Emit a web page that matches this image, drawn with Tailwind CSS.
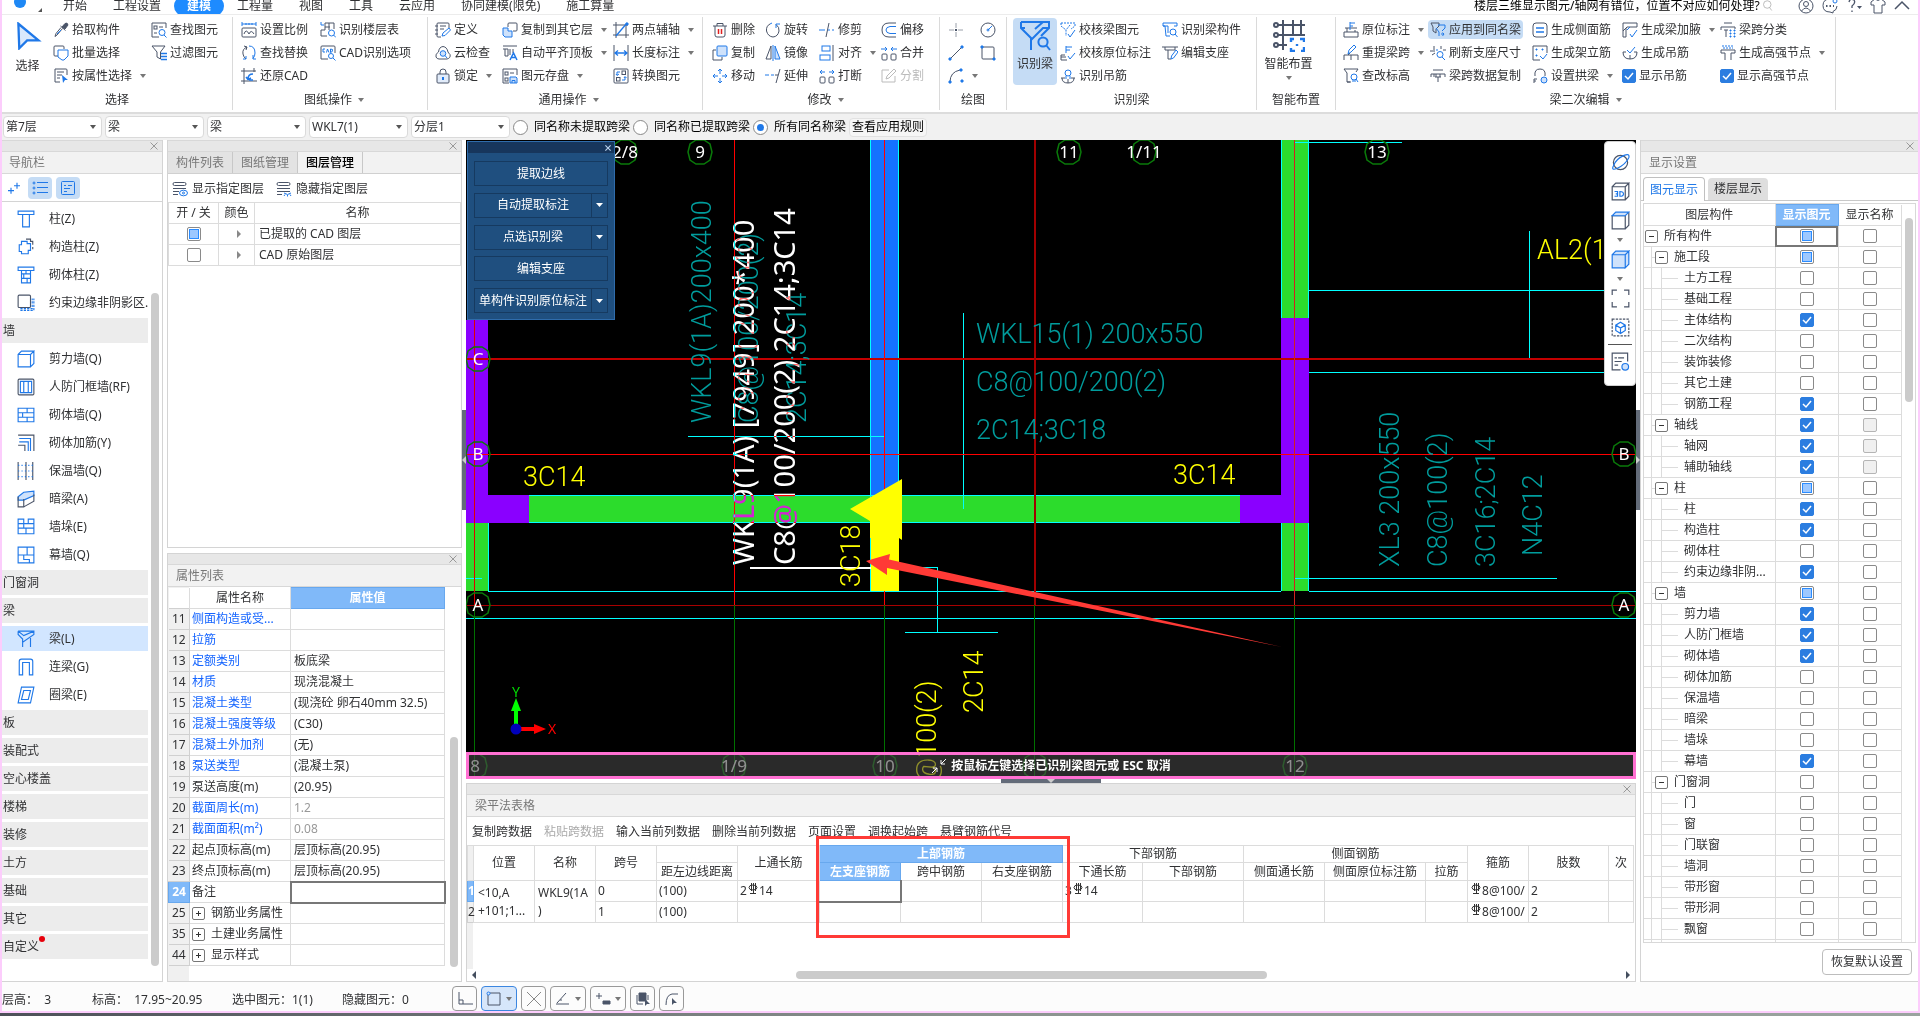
<!DOCTYPE html>
<html lang="zh-CN">
<head>
<meta charset="utf-8">
<meta name="viewport" content="width=device-width, initial-scale=1">
<title>建模</title>
<script src="https://cdn.jsdelivr.net/npm/@tailwindcss/browser@4"></script>
</head>
<body class="h-screen overflow-hidden flex flex-col bg-white text-[#303133] text-xs leading-4 font-['Noto_Sans','Noto_Sans_CJK_SC',sans-serif]">
<div class="flex-1 min-h-0 flex flex-col border-x-2 border-b-2 border-[#fccdfc]">

  <!-- menu -->
  <header class="h-[15px] shrink-0 flex items-center overflow-hidden border-b border-[#ececec] pb-0.5 pr-2">
    <div class="w-12 shrink-0 flex items-center pl-3 gap-3">
      <span class="size-3 -mt-2 rounded-full bg-[#1e88f5]"></span>
      <svg class="size-1 mt-2" viewBox="0 0 4 4" fill="#555"><path d="M4 0V4H0Z"/></svg>
    </div>
    <nav id="menu" class="flex items-center shrink-0"></nav>
    <div class="flex-1"></div>
    <input aria-label="搜索" class="w-72 h-4 outline-none text-black" value="楼层三维显示图元/轴网有错位，位置不对应如何处理?">
    <div id="tools" class="flex items-center gap-2"></div>
  </header>

  <!-- ribbon -->
  <section id="ribbon" class="h-[99px] shrink-0 flex pt-0.5 border-b-2 border-[#dcdcdc]"></section>

  <!-- context bar -->
  <form id="ctx" class="h-[26px] shrink-0 flex items-center gap-[3px] bg-[#f1f1f1] pl-px text-black"></form>

  <main class="flex-1 min-h-0 flex bg-white">
    <!-- navigation -->
    <aside class="w-[161px] shrink-0 flex flex-col border-r border-b border-[#d4d4d4]">
      <div class="h-3 bg-[#e7e7e7] border-y border-[#d8d8d8] flex justify-end items-center pr-1"><button aria-label="关闭" data-i="x" data-c="size-2"></button></div>
      <h2 class="h-[22px] bg-[#f2f2f2] border-b border-[#d8d8d8] flex items-center pl-[7px] text-[#777]">导航栏</h2>
      <div class="h-7 border-b border-[#d4d4d4] flex items-center gap-1 pl-0.5">
        <button aria-label="展开" class="w-5 h-[22px] grid place-items-center" data-i="plus2" data-c="size-3"></button>
        <button aria-label="列表" class="w-6 h-[22px] rounded-sm bg-[#c5dcf5] grid place-items-center" data-i="list" data-c="size-4"></button>
        <button aria-label="面板" class="w-6 h-[22px] rounded-sm bg-[#c5dcf5] grid place-items-center" data-i="panel" data-c="size-4"></button>
      </div>
      <div class="flex-1 min-h-0 flex pt-1 overflow-hidden">
        <ul id="nav" class="w-[146px] flex flex-col gap-[3px]"></ul>
        <div class="w-2 ml-[3px] mt-[87px] mb-[15px] rounded-full bg-[#cbcbcb]"></div>
      </div>
    </aside>

    <!-- layers and properties -->
    <div class="w-[295px] ml-1 shrink-0 flex flex-col gap-[5px]">
      <section class="h-[408px] shrink-0 border border-t-0 border-[#d4d4d4]">
        <div class="h-3 bg-[#e7e7e7] border-y border-[#d8d8d8] flex justify-end items-center pr-1"><button aria-label="关闭" data-i="x" data-c="size-2"></button></div>
        <div class="h-[22px] flex bg-[#f2f2f2] border-b border-[#d0d0d0] text-[#777] text-center">
          <button class="w-[65px] bg-[#e3e3e3] border-r border-[#c8c8c8]">构件列表</button>
          <button class="w-[65px] bg-[#e3e3e3] border-r border-[#c8c8c8]">图纸管理</button>
          <button class="w-[65px] border-r border-[#c8c8c8] text-black font-medium">图层管理</button>
        </div>
        <div class="h-7 flex items-center gap-3 pl-1 pt-0.5">
          <button class="flex items-center gap-1"><span data-i="layShow" data-c="size-4"></span>显示指定图层</button>
          <button class="flex items-center gap-1"><span data-i="layHide" data-c="size-4"></span>隐藏指定图层</button>
        </div>
        <table class="w-full table-fixed border-collapse">
          <colgroup><col class="w-[50px]"><col class="w-9"><col></colgroup>
          <thead><tr class="h-[21px]"><th class="font-normal border border-[#dcdcdc]">开 / 关</th><th class="font-normal border border-[#dcdcdc]">颜色</th><th class="font-normal border border-[#dcdcdc]">名称</th></tr></thead>
          <tbody id="layers"></tbody>
        </table>
      </section>
      <section class="flex-1 min-h-0 border border-[#d4d4d4] flex flex-col">
        <div class="h-[11px] bg-[#e7e7e7] border-b border-[#d8d8d8] flex justify-end items-center pr-1"><button aria-label="关闭" data-i="x" data-c="size-2"></button></div>
        <h2 class="h-[22px] bg-[#f2f2f2] border-b border-[#d8d8d8] flex items-center pl-2 text-[#777]">属性列表</h2>
        <div class="flex-1 min-h-0 flex overflow-hidden">
          <div class="w-[277px] bg-[linear-gradient(to_right,#f0f0f0_21px,#fff_21px)]">
            <table class="w-full table-fixed border-collapse">
              <colgroup><col class="w-[21px]"><col class="w-[101px]"><col></colgroup>
              <thead><tr class="h-[21px]"><th class="bg-white"></th><th class="font-normal border border-t-0 border-[#dcdcdc] bg-white">属性名称</th><th class="bg-[#80b9f9] border border-[#68a8ee] text-white font-bold">属性值</th></tr></thead>
              <tbody id="props"></tbody>
            </table>
          </div>
          <div class="w-2 ml-[5px] mt-[150px] mb-[14px] rounded-full bg-[#cbcbcb]"></div>
        </div>
      </section>
    </div>

    <div class="w-1 shrink-0 flex items-start pt-[270px]"><button aria-label="折叠左侧" class="w-1 h-[100px] bg-[#636b79] grid place-items-center"><svg class="w-1 h-2" viewBox="0 0 4 8" fill="#ccc"><path d="M4 0V8L0 4Z"/></svg></button></div>

    <!-- drawing and table -->
    <div class="flex-1 min-w-0 flex flex-col">
      <section class="flex-1 min-h-0 relative bg-black overflow-hidden">
        <svg id="cad" class="block w-full h-full" viewBox="466 140 1170 639" preserveAspectRatio="xMinYMin slice" fill="none"></svg>

        <!-- command palette -->
        <div class="absolute left-px top-px w-[148px] h-[179px] bg-[#1f4f7f] border border-[#2f6cab] text-white flex flex-col">
          <div class="h-[11px] bg-[#17365c] flex justify-end items-center pr-[3px]"><button aria-label="关闭" data-i="xw" data-c="size-1.5"></button></div>
          <div id="palette" class="flex-1 flex flex-col justify-between px-1.5 pt-2 pb-1.5"></div>
        </div>

        <!-- view tools -->
        <div id="views" class="absolute right-0 top-px w-8 h-[245px] bg-white rounded-sm border border-[#d0d0d0] flex flex-col items-center pt-1.5"></div>

        <!-- prompt bar -->
        <div class="absolute inset-x-0 bottom-0 h-[27px] border-3 border-[#ff70d2] bg-[#464646]/60 flex items-center justify-center text-white font-bold">
          <span class="mr-1" data-i="converge" data-c="size-4"></span><span>按鼠标左键选择已识别梁图元或 ESC 取消</span>
        </div>
      </section>
      <div class="h-1 flex justify-center"><button aria-label="折叠底部" class="w-[100px] h-1 bg-[#636b79] grid place-items-center"><svg class="w-2 h-1" viewBox="0 0 8 4" fill="#ccc"><path d="M0 0H8L4 4Z"/></svg></button></div>
      <section class="h-[199px] shrink-0 border border-[#d4d4d4] flex flex-col relative">
        <div class="h-[11px] shrink-0 bg-[#e7e7e7] border-b border-[#d8d8d8] flex justify-end items-center pr-1"><button aria-label="关闭" data-i="x" data-c="size-2"></button></div>
        <h2 class="h-[22px] shrink-0 bg-[#f2f2f2] border-b border-[#d8d8d8] flex items-center pl-2 text-[#777]">梁平法表格</h2>
        <div class="h-7 shrink-0 flex items-center gap-3 pl-[5px] pt-0.5">
          <button>复制跨数据</button><button class="text-[#aaa]" disabled>粘贴跨数据</button><button>输入当前列数据</button><button>删除当前列数据</button><button>页面设置</button><button>调换起始跨</button><button>悬臂钢筋代号</button>
        </div>
        <div class="flex-1 min-h-0 bg-[linear-gradient(to_right,#f0f0f0_6px,#fff_6px)] overflow-hidden">
          <table class="w-[1166px] table-fixed border-collapse whitespace-nowrap" id="beam"></table>
        </div>
        <div class="h-3 shrink-0 flex items-center justify-between px-1">
          <svg class="w-1.5 h-2" viewBox="0 0 6 8" fill="#444e5e"><path d="M5 0V8L1 4Z"/></svg>
          <div class="w-[471px] h-2 rounded-full bg-[#cbcbcb] -translate-x-5"></div>
          <svg class="w-1.5 h-2" viewBox="0 0 6 8" fill="#444e5e"><path d="M1 0V8L5 4Z"/></svg>
        </div>
        <div class="absolute left-[349px] top-[52px] w-[254px] h-[102px] border-3 border-[#ff3a36] pointer-events-none"></div>
      </section>
    </div>

    <div class="w-1 shrink-0 flex items-start pt-[270px]"><button aria-label="折叠右侧" class="w-1 h-[100px] bg-[#636b79] grid place-items-center"><svg class="w-1 h-2" viewBox="0 0 4 8" fill="#ccc"><path d="M0 0V8L4 4Z"/></svg></button></div>

    <!-- display settings -->
    <aside class="w-[278px] shrink-0 border-l border-b border-[#d4d4d4] flex flex-col">
      <div class="h-3 shrink-0 bg-[#e7e7e7] border-y border-[#d8d8d8] flex justify-end items-center pr-1"><button aria-label="关闭" data-i="x" data-c="size-2"></button></div>
      <h2 class="h-[22px] shrink-0 bg-[#f2f2f2] border-b border-[#d8d8d8] flex items-center pl-2 text-[#777]">显示设置</h2>
      <div class="h-[27px] shrink-0 flex items-end gap-[3px] pl-0.5 border-b border-[#c8c8c8]">
        <button class="w-[62px] h-6 -mb-px bg-white border border-b-0 border-[#c0c0c0] rounded-t text-[#1f78e8]">图元显示</button>
        <button class="w-[60px] h-[22px] bg-[#dedede] rounded-t">楼层显示</button>
      </div>
      <div class="flex-1 min-h-0 ml-0.5 mr-0.5 mt-0.5 border border-[#d8d8d8] flex overflow-hidden">
        <table class="w-[257px] h-px table-fixed border-collapse">
          <colgroup><col class="w-[131px]"><col class="w-[63px]"><col class="w-[63px]"></colgroup>
          <thead><tr class="h-[21px]"><th class="font-normal border border-t-0 border-l-0 border-[#dcdcdc]">图层构件</th><th class="bg-[#80b9f9] border border-[#68a8ee] text-white font-bold">显示图元</th><th class="font-normal border border-t-0 border-[#dcdcdc]">显示名称</th></tr></thead>
          <tbody id="tree"></tbody>
        </table>
        <div class="w-2 ml-[3px] mt-3.5 h-[184px] rounded-full bg-[#cbcbcb]"></div>
      </div>
      <div class="h-[38px] shrink-0 flex items-center justify-end pr-1.5"><button class="w-[90px] h-[26px] border border-[#bdbdbd] rounded-sm">恢复默认设置</button></div>
    </aside>
  </main>

  <!-- status -->
  <footer class="h-[29px] shrink-0 bg-[#fcfcfc] flex items-center">
    <div class="flex w-[450px] shrink-0 pt-1.5">
      <span class="w-[90px]">层高：&nbsp;&nbsp;3</span><span class="w-[140px]">标高：&nbsp;&nbsp;17.95~20.95</span><span class="w-[110px]">选中图元：1(1)</span><span>隐藏图元：0</span>
    </div>
    <div id="snap" class="flex gap-1 pt-1"></div>
  </footer>
</div>
<div class="h-[3px] shrink-0 bg-linear-to-r from-[#4d5159] via-[#8b938f] to-[#9aa49f]"></div>

<script>
const B='stroke="#1f78e8"', F='fill="#cfe2fb"';
const I={
x:'<path stroke="#999" stroke-width="2" d="M1 1 15 15M15 1 1 15"/>',
xw:'<path stroke="#bcd4ee" stroke-width="3" d="M1 1 15 15M15 1 1 15"/>',
plus2:`<path ${B} stroke-width="1.500" d="M0 11.500H8M4 7.500V15.500M8 5H16M12 1V9"/>`,
list:`<g ${B}><circle cx="2" cy="3" r="1"/><circle cx="2" cy="8" r="1"/><circle cx="2" cy="13" r="1"/><path d="M5 2.500H16M5 7.500H16M5 12.500H16"/></g>`,
panel:`<g ${B}><rect x="1.500" y="1.500" width="13" height="13" rx="1"/><path d="M4 5.500H6M8 5.500H12M4 8.500H10M4 11.500H7"/></g>`,
layShow:`<rect x="1" y="1.500" width="13" height="3" rx="1.500"/><path d="M1 7.500H14M1 10.500H7M1 13.500H6"/><ellipse ${B} cx="11.500" cy="12" rx="4" ry="2.800"/><circle ${B} cx="11.500" cy="12" r="1"/>`,
layHide:`<rect x="1" y="1.500" width="13" height="3" rx="1.500"/><path d="M1 7.500H14M1 10.500H14M1 13.500H6"/><path ${B} d="M8 12Q11.500 15 15 12M9 13.500 8 15M11.500 14V15.500M14 13.500 15 15"/>`,
cursor:`<path ${B} fill="#dbe9fc" stroke-width="1.300" d="M2.500 1 14 10.500H7.500L3 15Z"/>`,
pick:`<path fill="#4a5468" d="M9 5 12 1.500Q14.500 0 15 3L12 7Z"/><path d="M7.500 4 12.500 8.500M9.500 6.500 4 13 2 14.500 3 11.500 8 5.500"/><path ${B} d="M4 12 8 8"/>`,
batch:`<path d="M6 11H2Q1 11 1 10V2Q1 1 2 1H10Q11 1 11 2V4"/><path ${B} fill="#fff" d="M5 5H15V11L11 15H9L5 12Z"/>`,
attr:`<path d="M14 7V2Q14 1 13 1H2V14H7M4 4H11M4 7H9M4 10H7"/><path fill="#1f78e8" stroke="none" d="M9 7 15 12H12L10 15Z"/>`,
find:`<path d="M15 6V1H1V15H8"/><rect x="3" y="4" width="3" height="3"/><path d="M8 5H12M3 11H6"/><circle ${B} cx="11" cy="10.500" r="3"/><path ${B} d="M13 13 15.500 15.500"/>`,
filter:`<path d="M1 1H14L9.500 7V14L6 12V7Z"/><path ${B} stroke-width="1.500" d="M10 8.500H16M10 11.500H16M10 14.500H16"/>`,
scale:`<path ${B} d="M1 2H15M1 0V4M15 0V4M5 1V3M8 1V3M11 1V3"/><rect x="1" y="6" width="14" height="9" rx="1"/><path d="M3 12Q5 6 8 12Q10 7 13 12"/>`,
floor:`<path ${B} d="M1 0V3H4"/><path d="M5 1H14V7M5 1V8H1V14H7M5 5H10M9 1V8"/><circle ${B} cx="11.500" cy="11" r="3"/><path ${B} d="M13.500 13 16 15.500"/>`,
swap:`<path d="M6 2Q1 4 2 9 2.500 12 5 14" /><path ${B} d="M8 1Q14 1 14 8 14 11 12 13.500M12 10V14H15M2 14H5V11"/><path d="M3 1 6 2 5 5"/>`,
cad:`<path d="M15 8V2Q15 1 14 1H2Q1 1 1 2V14H8"/><path ${B} d="M5 4H3V7H5M6.500 7.500 7.500 4 9 7.500M10.500 4V7.500Q13 7 12.500 4.500Z"/><circle ${B} cx="11" cy="11" r="2.500"/><path ${B} d="M13 13 15.500 15.500"/>`,
restore:`<path d="M3 0V16M0 3H15M0 13H16M13 0V4"/><path ${B} stroke-width="1.500" d="M12 6Q7 6 7 11M5 9 7 11.500 10 10M12 12H8"/>`,
define:`<path d="M14 6V2Q14 1 13 1H3Q2 1 2 2V14Q2 15 3 15H6M0 4H3M0 8H3M0 12H3M5 4H11M5 7H9"/><path ${B} d="M7 14 8 11 14 6 15.500 8 10 13.500Z"/>`,
cloud:`<path d="M4 14H12Q16 13 15 9.500 13.500 8 13 7 12 2 8 1.500 4 2 3.500 7 0 9 1 12 2 14 4 14Z"/><circle ${B} ${F} cx="8" cy="8.500" r="2.800"/><path ${B} d="M10 10.500 12 13"/>`,
lock:`<rect x="2" y="6" width="12" height="9" rx="1" fill="#e2ecfa"/><path d="M5 6V4Q5 1 8 1T11 4V6"/><path ${B} stroke-width="2" d="M8 9V12"/>`,
copyTo:`<path d="M6 5V2Q6 1 7 1H14Q15 1 15 2V8Q15 9 14 9H11"/><path ${B} ${F} d="M1 6H6V9Q8 9 10 9V15H3L1 13Z"/>`,
align:`<path d="M1 1H15M3 4V11H6V4ZM11 4V8M1 4H3M8 4V10"/><path ${B} stroke-width="1.500" d="M8 15 11.500 8 15 15M9.500 12.500H13.500"/>`,
save:`<path d="M15 7V1H1V15H7"/><rect x="3" y="4" width="3" height="3"/><rect x="3" y="10" width="3" height="3"/><path d="M8 5H12"/><path ${B} ${F} d="M8 9H14L15 10V15H8ZM10 15V12.500H13V15"/>`,
axis2:`<path d="M3 0V16M0 3H15M0 13H16M13 3V16"/><path ${B} stroke-width="1.300" d="M3 14 14 1"/><path ${B} fill="#1f78e8" d="M13 1H15V3H13Z"/>`,
dim:`<path d="M1 0V16M15 0V16"/><path ${B} stroke-width="1.300" d="M2 8H14M5 5.500 2 8 5 10.500M11 5.500 14 8 11 10.500"/>`,
convert:`<rect x="1" y="1" width="14" height="14" rx="1"/><rect x="9" y="3" width="3.500" height="3.500"/><rect x="3.500" y="9.500" width="3.500" height="3.500"/><path ${B} d="M7 4H4V7M3 6 4 7.500 6 6M9 12H12V9M11 10 12 8.500 13.500 10"/>`,
del:`<path d="M1 4H15M5 4V1.500H11V4M3 4V13Q3 15 5 15H11Q13 15 13 13V4"/><path stroke="#e02020" stroke-width="1.500" d="M6.500 7V12M9.500 7V12"/>`,
copy:`<path d="M4 5H1V15H10V12"/><rect ${B} ${F} x="5" y="1" width="10" height="10" rx="1"/>`,
move:`<path ${B} d="M8 1V6M8 10V15M1 8H6M10 8H15M6 3 8 1 10 3M6 13 8 15 10 13M3 6 1 8 3 10M13 6 15 8 13 10"/>`,
rotate:`<path d="M5 2Q1 4 1.500 9 3 14.500 8 15 13 14.500 14 9 14.500 5 11 2.500"/><path ${B} d="M11 6V2H15M5 2 7 1"/>`,
mirror:`<path d="M6 1V14H1Z"/><path ${B} ${F} d="M10 1V14H15Z"/><path ${B} d="M8 0V16"/>`,
extend:`<path ${B} stroke-dasharray="4 2" d="M0 7H9"/><path d="M15 1 11 15M10 7H13"/>`,
trim:`<path ${B} d="M0 8H6"/><path d="M10 1 7 15"/><path ${B} stroke-dasharray="2 2" d="M9 8H16"/>`,
alignR:`<path d="M14 0V16"/><rect ${B} x="3" y="1" width="8" height="5"/><rect ${B} x="1" y="10" width="10" height="5"/>`,
brk:`<rect x="1" y="9" width="5" height="6" rx="1"/><rect x="10" y="9" width="5" height="6" rx="1"/><path ${B} d="M6 4H1M3 2 1 4 3 6M10 4H15M13 2 15 4 13 6"/>`,
offset:`<path d="M15 1H8Q1 1 1 8T8 15H15"/><path ${B} d="M15 4.500H9Q5 5 5 8T9 11.500H15"/>`,
merge:`<rect x="1" y="9" width="5" height="6" rx="1"/><rect x="10" y="9" width="5" height="6" rx="1"/><path ${B} d="M0 4H6M4 2 6 4 4 6M16 4H10M12 2 10 4 12 6"/>`,
split:`<path stroke="#bbb" d="M8 2H1V14H14V8M5 11 6 8 13 1 15 3 8 10Z"/>`,
point:`<path stroke="#9aa0aa" d="M8 1V6M8 10V15M1 8H6M10 8H15"/><rect x="7.500" y="7.500" width="1" height="1"/>`,
circle:`<circle cx="8" cy="8" r="7"/><path ${B} d="M8 8 12 4"/><circle ${B} cx="8" cy="8" r="1"/>`,
line:`<path d="M2 14 14 2"/><path ${B} fill="#1f78e8" d="M13 1H15V3H13ZM1 13H3V15H1Z"/>`,
rect:`<rect x="2" y="2" width="12" height="12" rx="1"/><path ${B} fill="#1f78e8" d="M1 1H3V3H1ZM13 13H15V15H13Z"/>`,
arc:`<path d="M2 14Q2 4 12 2"/><path ${B} fill="#1f78e8" d="M1 13H3V15H1ZM12 1H14V3H12ZM13 12H15V14H13Z"/>`,
beamQ:`<path ${B} d="M1 1H15V4L11 8M1 1V4L6 9V15M15 4H12L6 10M12 1 8 4.500M1 4H3"/><circle ${B} cx="12" cy="11" r="2.300"/><path ${B} d="M13.500 12.500 15.500 15"/>`,
chk1:`<path ${B} stroke-dasharray="2 1" d="M1 1H15V4L11 7M1 1V4L6 8V14M10 3 6 8"/><path ${B} d="M8 12 10 15 15 8"/>`,
chk2:`<path d="M1 15V10H5M1 12H6M1 15H7"/><path ${B} d="M6 1V8M6 2H12M6 5H10M8 11 10 14 15 8"/>`,
hang:`<path d="M1 10H5M11 10H15M2 10Q2 15 8 15T14 10M8 11V15"/><circle ${B} cx="8" cy="5" r="3"/><path ${B} d="M6 8V11M10 8V11"/>`,
idc:`<path ${B} d="M1 1H15V4H12M1 1V4H3L4 14H8M1 4H6M6 4V11"/><circle ${B} cx="11" cy="10" r="3"/><path ${B} d="M13 12 15.500 15"/>`,
edit:`<path d="M0 2H16M3 2V5H13V2M6 5V14M6 14H9"/><path ${B} d="M9 14 9.500 11 14 5 16 7 11.500 13Z"/>`,
grid:`<path d="M5 0V9M10 0V8M14 0V8M2 2.500H16M2 7.500H16M2 12.500H7M5 9V15"/><circle cx="1.500" cy="2.500" r="1"/><circle cx="1.500" cy="7.500" r="1"/><circle cx="1.500" cy="12.500" r="1"/><path ${B} stroke-width="1.200" d="M9 11V9.500H10.500M13.500 9.500H15.500V11M15.500 13.500V15.500H14M11 15.500H9V14M12 12V13"/>`,
orig:`<path d="M2 6H14M1 10H15V15H1ZM4 6V10M12 8V10"/><path ${B} d="M7 0V8M7 1H12M7 4H10"/>`,
reget:`<path d="M1 15V10H15V15M8 10V15M5 10 7 8"/><path ${B} d="M5 9 6 5 11 0 13 2 8 7Z"/>`,
level:`<path d="M1 1H15L13 4M1 1 4 5V14H7M4 14 8 14"/><circle ${B} cx="11" cy="9" r="3"/><path ${B} d="M13 11 15 14M9 13H13"/>`,
apply:`<path d="M1 1H9V4L6 7V11L3 9V5Z"/><path ${B} d="M8 3H15V6L12 9M6 6 9 10V14M11 12H14M12.500 10.500 14 12 12.500 14"/>`,
refresh:`<path d="M4 1V5M0 6H5M2 10 5 8M11 1V4M13 5H16"/><circle ${B} cx="10" cy="9.500" r="3"/><path ${B} d="M12 12 15 15M7 4V6"/>`,
spanCopy:`<path d="M3 2H13M1 6H15V9M1 6V9M4 6V9M5 9H11M8 9V14M6 6V9M10 6V9"/>`,
side:`<rect x="1" y="1" width="14" height="14" rx="3"/><path ${B} stroke-width="1.300" d="M4 6H12M4 10H12"/>`,
erect:`<path d="M15 8V1H1V15H8"/><path ${B} fill="#1f78e8" d="M4 4H5V5H4ZM10 4H11V5H10ZM4 10H5V11H4Z"/><path ${B} d="M8 11 11 14 15 9"/>`,
arch:`<path d="M2 15V11H5M2 13H4M3 8Q2 1 8 1T13 8"/><circle ${B} ${F} cx="12" cy="12" r="3"/>`,
haunch:`<path d="M1 1H15V5H5L1 9ZM1 9V15H4V6"/><path ${B} d="M5 8 8 5M8 12 10 15 15 8"/>`,
hang2:`<path d="M1 7Q1 14 8 14T15 7M1 7H4M12 7H15M8 14V10"/><path ${B} d="M5 5 8 8 13 2"/>`,
spanC:`<path d="M4 1H12M1 5H15M1 5V8M15 5V7M4 8H8M6 8V15"/><path ${B} fill="#1f78e8" d="M10 8H11V9H10ZM14 8H15V9H14ZM10 11H11V12H10ZM14 11H15V12H14ZM10 14H11V15H10ZM14 14H15V15H14Z"/>`,
node:`<path ${B} stroke-dasharray="2 1" d="M2 1H14M3 3H13"/><path d="M1 5H15V8H11V15M1 5V8H5V15"/>`,
user:`<circle cx="8" cy="8" r="7"/><circle cx="8" cy="6" r="2.500"/><path d="M3.500 13Q8 7 12.500 13"/>`,
chat:`<path d="M8 1Q1 1 1 7.500T8 14L11 15V13.500Q15 12 15 8"/><circle ${B} cx="13" cy="3" r="2"/><path stroke-width="2" d="M4 8H5.500M7.500 8H9M11 8H12"/>`,
help:`<path stroke-width="1.300" d="M3 4Q4 0 8 2 10 5 6 8V10M6 12.500V14"/><path fill="#4a5468" stroke="none" d="M11 8H16L13.500 11Z"/>`,
shirt:`<path d="M5 1 1 4V7H4V15H12V7H15V4L11 1Q8 4 5 1Z"/>`,
up:`<path stroke-width="1.500" d="M1 11 8 4 15 11"/>`,
mag:`<circle stroke="#aaa" cx="7" cy="6" r="5"/><path stroke="#aaa" d="M10 10 13 14"/>`,
tcol:`<path ${B} d="M1 1H15V4H1ZM5 4V15H11V4"/>`,
gz:`<path ${B} d="M5 3H9V5H12V11H10V14H4V12H2V6H4V3Z"/><path d="M8 1H12V3H14V6M14 8V10"/>`,
bcol:`<path ${B} d="M1 1H15V4H1ZM4 4V15H12V4M4 7H12M4 11H12M8 4V7M6 7V11M9 11V15"/>`,
sqs:`<path ${B} stroke-dasharray="2 1" d="M3 14.500H15V4M3 13H13.500V4"/><rect x="1" y="1" width="11" height="11" rx="1" fill="#fff"/>`,
cube:`<path ${B} d="M1 4H12V15H1ZM1 4 4 1H15L12 4M15 1V12L12 15"/>`,
rf:`<rect x="1" y="1" width="14" height="14" rx="1"/><path ${B} d="M3 3H13V13H3ZM6 3V13M10 3V13"/>`,
brick:`<path ${B} d="M1 2H15V14H1ZM1 6H15M1 10H15M9 2V6M5 6V10M9 10V14"/>`,
rebar:`<path d="M1 1H15V15M1 10H7V15"/><path ${B} d="M2 4H12V15M2 7H10V15"/>`,
insul:`<path d="M1 0V16M8 0V16M14 0V16"/><path ${B} stroke-dasharray="1 2" d="M1 3H14M1 8H14M1 13H14"/>`,
dbeam:`<path ${B} ${F} d="M1 6 6 2 15 1 15 5 6 9H1Z"/><path d="M1 6V15H6V8M6 15 15 10V4"/>`,
pier:`<path ${B} d="M1 1H6V5H10V1H15V14H1ZM1 5H15M1 9H15M8 9V14M6 5V9"/>`,
curtain:`<path ${B} d="M1 1H15V15H1ZM1 8H15M9 1V8M6 8V12H11V15"/>`,
beam:`<path ${B} d="M1 1H15V4L5 11V15M1 1V4L5 8V15M1 1 6 5 15 1M12 7V15M5 8V11"/>`,
lbeam:`<path ${B} d="M2 15V3Q2 1 4 1H12Q14 1 14 3V15H11V4H5V15Z"/>`,
ring:`<path ${B} d="M4 1H15L12 15H1ZM6 4H12L10 12H4Z"/>`,
orbit:`<circle cx="8" cy="8" r="6"/><path ${B} d="M2 11Q0 15 5 13 12 10 15 4 16 0 11 2 4 5 2 11Z"/>`,
c3d:`<path d="M1 4H12V15H1ZM1 4 4 1H15L12 4M15 1V12L12 15"/><path ${B} d="M3 8H5.500V12H3M4 10H5.500M7.500 8V12Q10.500 12 10.500 10T7.500 8Z"/>`,
ctop:`<path d="M1 4H12V15H1ZM15 1V12L12 15"/><path ${B} ${F} d="M1 4 4 1H15L12 4Z"/>`,
cfill:`<path ${B} ${F} d="M1 4H12V15H1ZM1 4 4 1H15L12 4M15 1V12L12 15V4Z"/>`,
full:`<path d="M1 5V1H5M11 1H15V5M15 11V15H11M5 15H1V11"/>`,
iso:`<rect x="1" y="1" width="14" height="14" stroke-dasharray="2 1"/><path ${B} d="M8 3.500 12 6V10.500L8 13 4 10.500V6ZM4 6 8 8.500 12 6M8 8.500V13"/>`,
doc:`<path d="M14 8V1H1V15H8M3 5H5M6 5H11M3 8H9M3 11H6"/><circle ${B} ${F} cx="12" cy="12.500" r="2.800"/>`,
converge:`<path stroke="#fff" d="M15 1 10 6M10 2V6H14M1 15 6 10M2 10H6V14"/>`,
ortho:`<path d="M2 1V13H16M2 9H6V13"/>`,
osnap:`<path d="M4 2H14V14H2V4"/><circle ${B} cx="2.500" cy="2.500" r="1.500"/>`,
cross:`<path stroke="#888" d="M1 1 15 15M15 1 1 15"/>`,
ang:`<path d="M2 12 11 2M1 13H14M6 8V10"/>`,
pm:`<path d="M1 5H7M4 2V8"/><path fill="#4a5468" d="M8 10H15V13H8Z"/>`,
lay:`<path fill="#4a5468" d="M4 2H11V10H4Z"/><path d="M2 4V13H8M13 4V9"/><path fill="#4a5468" stroke="none" d="M10 8 15 13H12L10 15Z"/>`,
poly:`<path d="M2 14Q2 4 8 3H14"/><path fill="#4a5468" stroke="none" d="M8 7 13 12H10L8 14Z"/>`,
};
const ic=(n,c='size-4')=>`<svg class="${c} shrink-0" viewBox="0 0 16 16" fill="none" stroke="#4a5468" aria-hidden="true">${I[n]}</svg>`;
const caret='<svg class="w-1.5 h-1 shrink-0" viewBox="0 0 6 4" fill="#777"><path d="M0 0H6L3 4Z"/></svg>';
const $=id=>document.getElementById(id);
document.querySelectorAll('[data-i]').forEach(e=>e.innerHTML=ic(e.dataset.i,e.dataset.c));

$('menu').innerHTML=['开始','工程设置','建模','工程量','视图','工具','云应用','协同建模(限免)','施工算量'].map(t=>t==='建模'
 ?`<a href="#" class="px-[13px] h-5 flex items-center rounded-full bg-[#1e8bff] text-white font-bold">${t}</a>`
 :`<a href="#" class="px-[13px] whitespace-nowrap">${t}</a>`).join('');
$('tools').innerHTML=ic('mag','size-3')+'<span class="w-2"></span>'+['user','chat','help','shirt','up'].map(n=>`<button aria-label="${n}">${ic(n,'size-4')}</button>`).join('');

const rb=(n,t,o={})=>`<div class="h-[23px] flex items-center"><button class="${o.on?'h-[19px] flex items-center gap-[3px] rounded-sm bg-[#c5dcf5] px-0.5 -ml-0.5':'h-[19px] flex items-center gap-[3px]'} ${o.off?'text-[#bbb]':''} whitespace-nowrap">${ic(n)}${t}${o.c?'<span class="w-0.5"></span>'+caret:''}</button></div>`;
const ck=(t)=>`<label class="h-[23px] flex items-center gap-[3px]">${box('on',t)}${t}</label>`;
const col=(w,h)=>`<div class="${w} shrink-0">${h.join('')}</div>`;
const grp=(w,body,label,c)=>`<div class="${w} shrink-0 h-[93px] border-r border-[#dadada] flex flex-col"><div class="h-[72px] pt-px flex">${body}</div><div class="h-[21px] flex items-center justify-center gap-1.5">${label}${c?caret:''}</div></div>`;
function box(s,l){
 if(s==='on')return `<span class="inline-grid size-3.5"><input type="checkbox" checked aria-label="${l}" class="[grid-area:1/1] appearance-none size-3.5 rounded-xs border border-[#2b7de0] bg-[#2b7de0]"><svg class="[grid-area:1/1] size-3.5 pointer-events-none" viewBox="0 0 14 14" fill="none" stroke="#fff" stroke-width="1.500"><path d="M3 7 6 10 11 4"/></svg></span>`;
 if(s==='part')return `<span class="inline-grid place-items-center size-3.5"><input type="checkbox" aria-label="${l}" class="[grid-area:1/1] appearance-none size-3.5 rounded-xs border border-[#8a8a8a] bg-white"><span class="[grid-area:1/1] size-2.5 border border-[#2b8cff] bg-[#9dc8ff] pointer-events-none"></span></span>`;
 if(s==='dis')return `<span class="inline-grid size-3.5"><input type="checkbox" disabled aria-label="${l}" class="appearance-none size-3.5 rounded-xs border border-[#b5b5b5] bg-[#f0f0f0]"></span>`;
 return `<span class="inline-grid size-3.5"><input type="checkbox" aria-label="${l}" class="appearance-none size-3.5 rounded-xs border border-[#8a8a8a] bg-white"></span>`;
}
$('ribbon').innerHTML=
grp('w-[231px]','<button class="w-[51px] flex flex-col items-center gap-2 pt-1">'+ic('cursor','size-7')+'选择</button>'+col('w-[98px]',[rb('pick','拾取构件'),rb('batch','批量选择'),rb('attr','按属性选择',{c:1})])+col('w-20',[rb('find','查找图元'),rb('filter','过滤图元')]),'选择')
+grp('w-[195px] pl-2',col('w-[79px]',[rb('scale','设置比例'),rb('swap','查找替换'),rb('restore','还原CAD')])+col('w-[104px]',[rb('floor','识别楼层表'),rb('cad','CAD识别选项')]),'图纸操作',1)
+grp('w-[275px] pl-[7px]',col('w-[67px]',[rb('define','定义'),rb('cloud','云检查'),rb('lock','锁定',{c:1})])+col('w-[111px]',[rb('copyTo','复制到其它层',{c:1}),rb('align','自动平齐顶板',{c:1}),rb('save','图元存盘',{c:1})])+col('w-20',[rb('axis2','两点辅轴',{c:1}),rb('dim','长度标注',{c:1}),rb('convert','转换图元')]),'通用操作',1)
+grp('w-[237px] pl-[9px]',col('w-[53px]',[rb('del','删除'),rb('copy','复制'),rb('move','移动')])+col('w-[54px]',[rb('rotate','旋转'),rb('mirror','镜像'),rb('extend','延伸')])+col('w-[62px]',[rb('trim','修剪'),rb('alignR','对齐',{c:1}),rb('brk','打断')])+col('w-[54px]',[rb('offset','偏移'),rb('merge','合并'),rb('split','分割',{off:1})]),'修改',1)
+grp('w-[67px]','<div class="w-2 shrink-0"></div>'+col('w-8',[rb('point',''),rb('line',''),rb('arc','',{c:1})])+col('w-5',[rb('circle',''),rb('rect','')]),'绘图')
+grp('w-[250px]','<button class="w-11 h-[67px] rounded-sm bg-[#c5dcf5] flex flex-col items-center gap-1 pt-0.5 ml-1.5 mr-[3px]">'+ic('beamQ','size-8')+'识别梁</button>'+col('w-[102px]',[rb('chk1','校核梁图元'),rb('chk2','校核原位标注'),rb('hang','识别吊筋')])+col('w-20',[rb('idc','识别梁构件'),rb('edit','编辑支座')]),'识别梁')
+grp('w-[79px]','<button class="w-[63px] flex flex-col items-center gap-1 pt-0.5">'+ic('grid','size-8')+'智能布置'+caret+'</button>','智能布置')
+grp('w-[500px]','<div class="w-[7px] shrink-0"></div>'+col('w-[87px]',[rb('orig','原位标注',{c:1}),rb('reget','重提梁跨',{c:1}),rb('level','查改标高')])+col('w-[102px]',[rb('apply','应用到同名梁',{on:1}),rb('refresh','刷新支座尺寸'),rb('spanCopy','梁跨数据复制')])+col('w-[90px]',[rb('side','生成侧面筋'),rb('erect','生成架立筋'),rb('arch','设置拱梁',{c:1})])+col('w-[98px]',[rb('haunch','生成梁加腋',{c:1}),rb('hang2','生成吊筋'),ck('显示吊筋')])+col('w-[110px]',[rb('spanC','梁跨分类'),rb('node','生成高强节点',{c:1}),ck('显示高强节点')]),'梁二次编辑',1);

$('ctx').innerHTML=[['楼层','第7层'],['构件大类','梁'],['构件类型','梁'],['构件','WKL7(1)'],['分层','分层1']].map(([l,v])=>
`<div class="grid items-center w-[99px] h-[22px] shrink-0"><select aria-label="${l}" class="[grid-area:1/1] appearance-none w-full h-[22px] bg-white border border-[#dadada] rounded-sm px-0.5 text-[#303133]"><option>${v}</option></select><svg class="[grid-area:1/1] justify-self-end mr-1.5 w-1.5 h-1 pointer-events-none" viewBox="0 0 6 4" fill="#555"><path d="M0 0H6L3 4Z"/></svg></div>`).join('')
+['同名称未提取跨梁','同名称已提取跨梁','所有同名称梁'].map((t,i)=>`<label class="flex items-center gap-1.5 whitespace-nowrap"><span class="inline-grid place-items-center"><input type="radio" name="scope" ${i===2?'checked':''} class="peer [grid-area:1/1] appearance-none size-[15px] rounded-full border border-[#888] bg-white"><span class="[grid-area:1/1] size-[7px] rounded-full bg-[#1f78e8] hidden peer-checked:block"></span></span>${t}</label>`).join('')
+'<button type="button" class="h-[19px] px-0.5 rounded-sm border border-[#e2e2e2] bg-[#f6f6f6]">查看应用规则</button>';

const nav=[['tcol','柱(Z)'],['gz','构造柱(Z)'],['bcol','砌体柱(Z)'],['sqs','约束边缘非阴影区...'],'墙',['cube','剪力墙(Q)'],['rf','人防门框墙(RF)'],['brick','砌体墙(Q)'],['rebar','砌体加筋(Y)'],['insul','保温墙(Q)'],['dbeam','暗梁(A)'],['pier','墙垛(E)'],['curtain','幕墙(Q)'],'门窗洞','梁',['beam','梁(L)'],['lbeam','连梁(G)'],['ring','圈梁(E)'],'板','装配式','空心楼盖','楼梯','装修','土方','基础','其它','自定义'];
$('nav').innerHTML=nav.map(n=>typeof n==='string'
 ?`<li class="h-[25px] shrink-0 bg-[#ececec] flex items-center pl-px"><a href="#">${n}</a>${n==='自定义'?'<span class="size-1.5 rounded-full bg-red-600 mb-4"></span>':''}</li>`
 :`<li class="${n[0]==='beam'?'h-[25px] shrink-0 bg-[#d2e6ff]':'h-[25px] shrink-0'}"><a href="#" class="h-full flex items-center gap-3.5 pl-[15px] whitespace-nowrap overflow-hidden">${ic(n[0],'size-[18px]')}${n[1]}</a></li>`).join('');

$('layers').innerHTML=[['part','已提取的 CAD 图层'],['off','CAD 原始图层']].map(([s,t])=>`<tr class="h-[21px]"><td class="border border-[#dcdcdc] p-0"><div class="h-5 grid place-items-center">${box(s,t)}</div></td><td class="border border-[#dcdcdc]"><svg class="w-1 h-2 ml-[18px]" viewBox="0 0 4 8" fill="#888"><path d="M0 0 4 4 0 8Z"/></svg></td><td class="border border-[#dcdcdc] pl-1">${t}</td></tr>`).join('');

const pm=(s)=>`<button aria-label="展开或折叠" class="size-[13px] shrink-0 rounded-xs border border-[#777] bg-white grid place-items-center"><svg class="size-[7px]" viewBox="0 0 7 7" stroke="#333"><path d="${s==='+'?'M1 3.500H6M3.500 1V6':'M1 3.500H6'}"/></svg></button>`;
$('props').innerHTML=[[11,'侧面构造或受...','',1],[12,'拉筋','',1],[13,'定额类别','板底梁',1],[14,'材质','现浇混凝土',1],[15,'混凝土类型','(现浇砼 卵石40mm 32.5)',1],[16,'混凝土强度等级','(C30)',1],[17,'混凝土外加剂','(无)',1],[18,'泵送类型','(混凝土泵)',1],[19,'泵送高度(m)','(20.95)'],[20,'截面周长(m)','1.2',2],[21,'截面面积(m²)','0.08',2],[22,'起点顶标高(m)','层顶标高(20.95)'],[23,'终点顶标高(m)','层顶标高(20.95)'],[24,'备注','',3],[25,'钢筋业务属性','',4],[35,'土建业务属性','',4],[44,'显示样式','',4]].map(([n,a,b,k])=>
`<tr class="h-[21px]"><td class="${k===3?'bg-[#80b9f9] text-white font-bold border border-[#68a8ee] text-center p-0':'bg-[#f0f0f0] border border-l-0 border-[#d0d0d0] text-center p-0'}">${n}</td><td class="${k===1||k===2?'text-[#1565ff] border border-[#dcdcdc] pl-0.5 whitespace-nowrap':'border border-[#dcdcdc] pl-0.5 whitespace-nowrap'}">${k===4?`<span class="flex items-center gap-1.5">${pm('+')}${a}</span>`:a}</td><td class="${k===3?'outline-2 -outline-offset-1 outline-[#777]':k===2?'text-[#999] border border-[#dcdcdc] pl-[3px]':'border border-[#dcdcdc] pl-[3px] whitespace-nowrap'}">${b}</td></tr>`).join('');

$('palette').innerHTML=[['提取边线'],['自动提取标注',1],['点选识别梁',1],['编辑支座'],['单构件识别原位标注',1]].map(([t,c])=>`<div class="h-[25px] flex border border-[#163a60]"><button class="flex-1 whitespace-nowrap">${t}</button>${c?`<button aria-label="更多" class="w-4 border-l border-[#163a60] grid place-items-center"><svg class="w-[7px] h-1" viewBox="0 0 7 4" fill="#fff"><path d="M0 0H7L3.500 4Z"/></svg></button>`:''}</div>`).join('');

const vb=(n)=>`<button aria-label="${n}" class="h-[29px] shrink-0 grid place-items-center">${ic(n,'size-[19px]')}</button>`;
$('views').innerHTML=vb('orbit')+vb('c3d')+vb('ctop')+`<span class="h-2.5 flex items-center">${caret}</span>`+vb('cfill')+`<span class="h-2.5 flex items-center">${caret}</span>`+vb('full')+vb('iso')+'<span class="w-6 h-px bg-[#555] my-0.5 shrink-0"></span>'+vb('doc');

/* CAD drawing */
const P='#8a00ff',G='#2cdc2c',C='#00ffff';
const r=(x,y,w,h,f)=>`<rect x="${x}" y="${y}" width="${w}" height="${h}" fill="${f}"/>`;
const l=(x1,y1,x2,y2,s,w=1)=>`<path d="M${x1} ${y1}L${x2} ${y2}" stroke="${s}" stroke-width="${w}"/>`;
const tx=(x,y,t,f,v)=>`<text ${v?`transform="translate(${x} ${y}) rotate(-90)"`:`x="${x}" y="${y}"`} fill="${f}" class="text-[27px] font-light font-['Roboto',sans-serif]">${t}</text>`;
const bub=(x,y,t)=>`<path transform="translate(${x} ${y})" stroke="#0a7a0a" stroke-width="1.500" d="M-4-12H4L10-8 12 0 10 8 4 12H-4L-10 8-12 0-10-8Z"/><text x="${x}" y="${y+6}" text-anchor="middle" fill="#fff" class="text-[17px]">${t}</text>`;
const T='#009c9c',Y='#ffff00';
let s='';
s+=r(466,320,22,203,P)+r(466,495,63,28,P)+r(466,523,22,68,G)+r(529,495,711,28,G)+r(1281,140,28,178,G)+r(1281,318,28,205,P)+r(1240,495,41,28,P)+r(1281,523,28,68,G)+r(870,140,29,370,'#1472ff');
s+=[[870.5,140,870.5,591],[898.5,140,898.5,591],[529,495.5,1240,495.5],[529,522.5,1240,522.5],[488.5,523,488.5,591],[1281.5,140,1281.5,318],[1308.5,140,1308.5,318],[1281.5,523,1281.5,591],[1308.5,523,1308.5,591],[488,591.5,1281,591.5],[1309,591.5,1636,591.5],[466,618.5,1636,618.5],[688,436.5,884,436.5],[466,578.5,482,578.5],[963.5,313,963.5,509],[1309,290.5,1604,290.5],[1529.500,231,1529.500,359],[1309,372.5,1604,372.5],[1295,142.5,1402,142.5],[1295,578.5,1557,578.5],[899,567.5,938,567.5],[937.5,567,937.5,632],[905,632.5,998,632.5]].map(a=>l(...a,C)).join('');
s+=l(466,359,1636,359,'#c40000',2)+l(466,454.5,1636,454.5,'#ff0000',1)+l(466,605.5,1636,605.5,'#a80000',1);
s+=l(474.5,320,474.5,605,'#e00000')+l(734.5,140,734.5,605,'#ff0000',1)+l(884.5,140,884.5,605,'#ff0000',1)+l(1035,140,1035,605,'#a00000',2)+l(1294.5,140,1294.5,605,'#d42020',1);
s+=[474.5,734.5,884.5,1034.5,1294.5].map(x=>l(x,605,x,779,'#007000')).join('');
s+=l(750,568,871,568,'#fff',2)+'<path fill="#ffff00" d="M850 509 902 479V540L899 538H870V521Z"/>'+r(871,509,28,82,'#ffff00');
s+=tx(976,343,'WKL15(1) 200x550',T)+tx(976,391,'C8@100/200(2)',T)+tx(976,439,'2C14;3C18',T);
s+=tx(711,423,'WKL9(1A)200x400',T,1)+tx(758,423,'C8@100/200(2)',T,1)+tx(806,423,'2C14;3C14',T,1);
s+=tx(1399,567,'XL3 200x550',T,1)+tx(1447,567,'C8@100(2)',T,1)+tx(1495,567,'3C16;2C14',T,1)+tx(1542,556,'N4C12',T,1);
s+=tx(523,486,'3C14',Y)+tx(1173,484,'3C14',Y)+tx(860,587,'3C18',Y,1)+tx(936,815,'C8@100(2)',Y,1)+tx(983,713,'2C14',Y,1)+tx(1537,259,'AL2(1',Y);
s+=`<g class="mix-blend-difference text-[29px]" fill="#fff"><text transform="translate(754 565) rotate(-90)">WKL9(1A) [7949] 200*400</text><text transform="translate(795 565) rotate(-90)">C8@100/200(2) 2C14;3C14</text></g>`;
s+=bub(625,152,'2/8')+bub(700,152,'9')+bub(1069,152,'11')+bub(1144,152,'1/11')+bub(1377,152,'13')+bub(478,359,'C')+bub(478,454,'B')+bub(478,605,'A')+bub(1624,454,'B')+bub(1624,605,'A')+bub(475,766,'8')+bub(734,766,'1/9')+bub(885,766,'10')+bub(1035,766,'')+bub(1295,766,'12');
s+=r(514,708,4,16,'#0f0')+'<path fill="#0f0" d="M516 698 521 711H511Z"/>'+r(521,727,14,4,'#f00')+'<path fill="#f00" d="M546 729 534 734V724Z"/><circle cx="516" cy="729" r="5.500" fill="#00b"/><g class="text-sm" text-anchor="middle"><text x="516" y="697" fill="#0d0">Y</text><text x="552" y="734" fill="#f00">X</text></g>';
s+='<path fill="#ff3a36" d="M866 561 890 554 889 559.500 1282 647 887 568V575Z"/>';
$('cad').innerHTML=s;

/* beam table */
const W=['w-1.5','w-[61px]','w-[61px]','w-[61px]','w-[81px]','w-[82px]','w-[81px]','w-[81px]','w-[81px]','w-[80px]','w-[101px]','w-[81px]','w-[101px]','w-[42px]','w-[61px]','w-20','w-[25px]'];
const st='<svg class="inline size-3 -mt-1.5" viewBox="0 0 12 12" fill="none" stroke="#333"><ellipse cx="6" cy="4.500" rx="4" ry="2.500"/><path d="M6.500 0V11M3 10.500H9M4.500 0V8M8.500 0V8"/></svg>';
const th=(t,a='')=>`<th ${a} class="border border-[#dcdcdc] font-normal p-0 overflow-hidden">${t}</th>`;
const td=(t,a='')=>`<td ${a} class="border border-[#dcdcdc] pl-0.5 overflow-hidden">${t}</td>`;
$('beam').innerHTML=`<colgroup>${W.map(w=>`<col class="${w}">`).join('')}</colgroup><thead><tr class="h-[17px]">${th('','rowspan="2"')+th('位置','rowspan="2"')+th('名称','rowspan="2"')+th('跨号','rowspan="2"')+th('')+th('上通长筋','rowspan="2"')}<th colspan="3" class="bg-[#80b9f9] border border-[#68a8ee] text-white font-bold">上部钢筋</th>${th('下部钢筋','colspan="2"')+th('侧面钢筋','colspan="3"')+th('箍筋','rowspan="2"')+th('肢数','rowspan="2"')+th('次','rowspan="2"')}</tr>
<tr class="h-[18px]">${th('距左边线距离')}<th class="bg-[#80b9f9] border border-[#68a8ee] text-white font-bold p-0">左支座钢筋</th>${['跨中钢筋','右支座钢筋','下通长筋','下部钢筋','侧面通长筋','侧面原位标注筋','拉筋'].map(t=>th(t)).join('')}</tr></thead>
<tbody><tr class="h-[21px]"><td class="bg-[#80b9f9] text-white font-bold p-0 border border-[#68a8ee]">1</td><td rowspan="2" class="border border-[#dcdcdc] pl-1 leading-[18px]">&lt;10,A<br>+101;1...</td><td rowspan="2" class="border border-[#dcdcdc] pl-[3px] leading-[18px]">WKL9(1A<br>)</td>${td('0')+td('(100)')+td('2'+st+'14')}<td class="border border-r-2 border-b-2 border-[#dcdcdc] border-r-[#777] border-b-[#777]"></td>${td('')+td('')+td('3'+st+'14')+td('')+td('')+td('')+td('')+td(st+'8@100/')+td('2')+td('')}</tr>
<tr class="h-[21px]"><td class="bg-[#f0f0f0] p-0 border border-[#d0d0d0]">2</td>${td('1')+td('(100)')+td('')+td('')+td('')+td('')+td('')+td('')+td('')+td('')+td('')+td(st+'8@100/')+td('2')+td('')}</tr></tbody>`;

/* display tree: [level, name, shown, label] */
const t=[[0,'所有构件','part'],[1,'施工段','part'],[2,'土方工程'],[2,'基础工程'],[2,'主体结构','on'],[2,'二次结构'],[2,'装饰装修'],[2,'其它土建'],[2,'钢筋工程','on'],[1,'轴线','on','dis'],[2,'轴网','on','dis'],[2,'辅助轴线','on','dis'],[1,'柱','part'],[2,'柱','on'],[2,'构造柱','on'],[2,'砌体柱'],[2,'约束边缘非阴...','on'],[1,'墙','part'],[2,'剪力墙','on'],[2,'人防门框墙','on'],[2,'砌体墙','on'],[2,'砌体加筋'],[2,'保温墙'],[2,'暗梁'],[2,'墙垛'],[2,'幕墙','on'],[1,'门窗洞'],[2,'门'],[2,'窗'],[2,'门联窗'],[2,'墙洞'],[2,'带形窗'],[2,'带形洞'],[2,'飘窗'],[2,'']];
const e='<span class="w-2 h-5 border-r border-[#dcdcdc]"></span>';
$('tree').innerHTML=t.map(([v,n,a,b],i)=>`<tr class="h-[21px]"><td class="border border-l-0 border-[#dcdcdc] p-0"><div class="h-5 flex items-center whitespace-nowrap">${v===0?'<span class="w-px"></span>'+pm('-')+'<span class="w-1.5"></span>':v===1?e+'<span class="w-[3px] h-px bg-[#dcdcdc]"></span>'+pm('-')+'<span class="w-1.5"></span>':e+'<span class="w-2.5 h-5 border-r border-[#dcdcdc]"></span><span class="w-4 h-px bg-[#dcdcdc] mr-1.5"></span>'}${n}</div></td><td class="${i===0?'outline-2 -outline-offset-2 outline-[#777] p-0':'border border-[#dcdcdc] p-0'}"><div class="h-5 grid place-items-center">${box(a,n+'显示图元')}</div></td><td class="border border-[#dcdcdc] p-0"><div class="h-5 grid place-items-center">${box(b,n+'显示名称')}</div></td></tr>`).join('');

$('snap').innerHTML=[['ortho'],['osnap',1],['cross'],['ang',1],['pm',1],['lay'],['poly']].map(([n,c])=>`<button aria-label="${n}" class="${n==='osnap'?'w-9 h-[25px] rounded-sm border border-[#3b86e0] bg-[#d6e6fa] flex items-center justify-center gap-1':c?'w-9 h-[25px] rounded-sm border border-[#999] flex items-center justify-center gap-1':'w-[25px] h-[25px] rounded-sm border border-[#999] flex items-center justify-center'}">${ic(n)}${c?caret:''}</button>`).join('');
</script>
</body>
</html>
